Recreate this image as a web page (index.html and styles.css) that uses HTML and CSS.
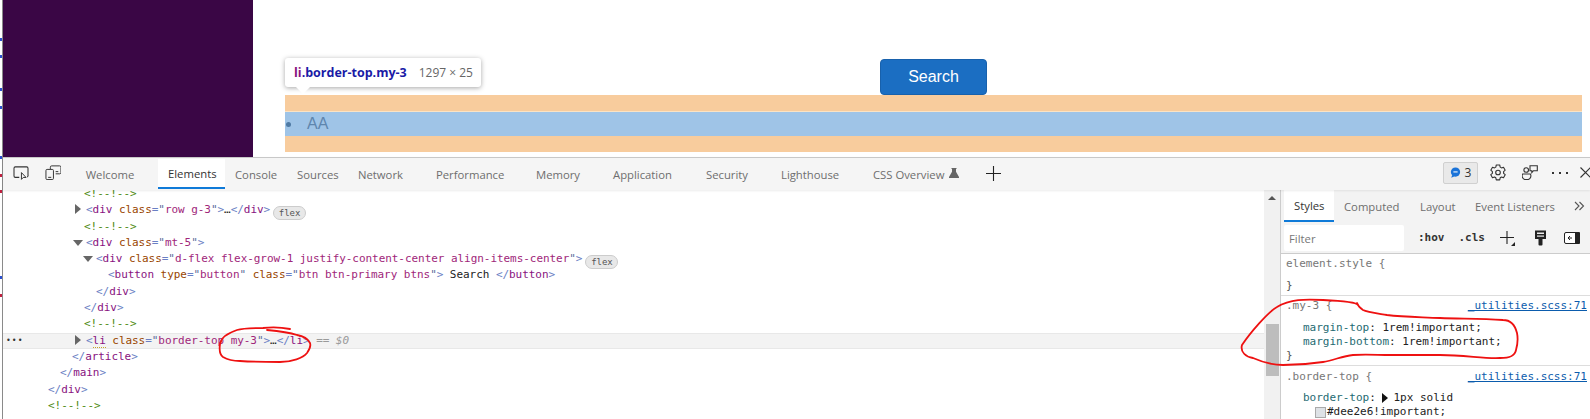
FILE: index.html
```html
<!DOCTYPE html>
<html lang="en">
<head>
<meta charset="utf-8">
<title>DevTools</title>
<link rel="stylesheet" href="styles.css">
</head>
<body>
<div class="page">
  <div class="edge"></div>
  <div class="main">
    <section class="viewport">
      <div class="sidebar"></div>
      <div class="content">
        <div class="tip">
          <span class="tip-tag">li</span><span class="tip-cls">.border-top.my-3</span><span class="tip-size">1297 × 25</span>
        </div>
        <div class="btn-row"><button class="search" type="button">Search</button></div>
        <div class="hl">
          <div class="hl-margin"></div>
          <div class="hl-line"></div>
          <div class="hl-box"><span class="bullet"></span><span class="aa">AA</span></div>
          <div class="hl-margin"></div>
        </div>
      </div>
    </section>

    <section class="devtools">
      <header class="toolbar">
        <div class="tool-icons">
          <svg class="ic" width="16" height="14" viewBox="0 0 18 16"><path d="M7 13H2.500A1.500 1.500 0 0 1 1 11.500v-9A1.500 1.500 0 0 1 2.500 1h13A1.500 1.500 0 0 1 17 2.500V11a1.500 1.500 0 0 1-1 1.500" fill="none" stroke="#333" stroke-width="1.2"/><path d="M9.500 7.500v7.800l2-2.200h3.300z" fill="none" stroke="#333" stroke-width="1.100"/></svg>
          <svg class="ic" width="16" height="15" viewBox="0 0 18 17"><path d="M6 4.500V2.500A1.500 1.500 0 0 1 7.500 1h9A1.500 1.500 0 0 1 18 2.500v6a1.500 1.500 0 0 1-1.500 1.500H12" fill="none" stroke="#333" stroke-width="1.100"/><rect x="1" y="5" width="8.500" height="11.500" rx="1.300" fill="none" stroke="#333" stroke-width="1.100"/><path d="M3.500 14h3.500M12 7.500h3" stroke="#333" stroke-width="1.100"/></svg>
        </div>
        <nav class="tabs">
          <span class="tab w-welcome">Welcome</span>
          <span class="tab tab-on w-elements">Elements</span>
          <span class="tab w-console">Console</span>
          <span class="tab w-sources">Sources</span>
          <span class="tab w-network">Network</span>
          <span class="tab w-perf">Performance</span>
          <span class="tab w-memory">Memory</span>
          <span class="tab w-app">Application</span>
          <span class="tab w-security">Security</span>
          <span class="tab w-light">Lighthouse</span>
          <span class="tab w-css">CSS Overview<svg class="flask" width="10" height="10" viewBox="0 0 10 10"><path d="M2.500 0h5v1H7v2.800l3 5.200v1H0V9l3-5.200V1h-.5z" fill="#666"/></svg></span>
          <svg class="plus" width="15" height="15" viewBox="0 0 15 15"><path d="M7.500 0v15M0 7.500h15" stroke="#222" stroke-width="1.100"/></svg>
        </nav>
        <div class="tool-right">
          <span class="badge"><svg width="11" height="11" viewBox="0 0 13 13"><circle cx="6.500" cy="6" r="5.500" fill="#1a73d8"/><path d="M2.500 9.500 1.500 12.800 5.500 11z" fill="#1a73d8"/><rect x="4" y="5" width="5" height="1.600" fill="#cfe2f8"/></svg><span class="badge-n">3</span></span>
          <svg class="gear" width="16" height="17" viewBox="0 0 16 17"><path d="M6.300 1h3.400l.5 2.100 1.300.8 2-.7 1.700 3-1.600 1.400v1.700l1.600 1.400-1.700 3-2-.7-1.300.8-.5 2.100H6.300l-.5-2.100-1.300-.8-2 .7-1.700-3 1.600-1.400V7.600L.8 6.200l1.700-3 2 .7 1.300-.8z" fill="none" stroke="#333" stroke-width="1.100" stroke-linejoin="round"/><circle cx="8" cy="8.500" r="2.300" fill="none" stroke="#333" stroke-width="1.100"/></svg>
          <svg class="feedback" width="16" height="16" viewBox="0 0 16 16"><circle cx="4.200" cy="5" r="2.300" fill="none" stroke="#333" stroke-width="1.100"/><path d="M.6 9h7.800a3.900 3.900 0 0 1-2 5.500h-3.800a3.900 3.900 0 0 1-2-5.500z" fill="none" stroke="#333" stroke-width="1.100"/><path d="M8 .7h7.300v5H11.500L9.800 7.500V5.700H8z" fill="none" stroke="#333" stroke-width="1.100"/></svg>
          <span class="dots"><i></i><i></i><i></i></span>
          <svg class="close" width="12" height="11" viewBox="0 0 12 11"><path d="M.5.500l10 10M10.500.500l-10 10" stroke="#333" stroke-width="1.100"/></svg>
        </div>
      </header>

      <div class="panes">
        <div class="elements">
          <div class="tree">
            <div class="row row-first i-c1"><span class="c">&lt;!--!--&gt;</span></div>
            <div class="row i-d"><span class="tri tri-r"></span><span class="b">&lt;</span><span class="n">div</span> <span class="a">class</span><span class="b">=</span><span class="q">"</span><span class="v">row g-3</span><span class="q">"</span><span class="b">&gt;</span><span class="t">…</span><span class="b">&lt;/</span><span class="n">div</span><span class="b">&gt;</span><span class="pill">flex</span></div>
            <div class="row i-c1"><span class="c">&lt;!--!--&gt;</span></div>
            <div class="row i-d"><span class="tri tri-d"></span><span class="b">&lt;</span><span class="n">div</span> <span class="a">class</span><span class="b">=</span><span class="q">"</span><span class="v">mt-5</span><span class="q">"</span><span class="b">&gt;</span></div>
            <div class="row i-e"><span class="tri tri-d"></span><span class="b">&lt;</span><span class="n">div</span> <span class="a">class</span><span class="b">=</span><span class="q">"</span><span class="v">d-flex flex-grow-1 justify-content-center align-items-center</span><span class="q">"</span><span class="b">&gt;</span><span class="pill">flex</span></div>
            <div class="row i-f"><span class="b">&lt;</span><span class="n">button</span> <span class="a">type</span><span class="b">=</span><span class="q">"</span><span class="v">button</span><span class="q">"</span> <span class="a">class</span><span class="b">=</span><span class="q">"</span><span class="v">btn btn-primary btns</span><span class="q">"</span><span class="b">&gt;</span><span class="t"> Search </span><span class="b">&lt;/</span><span class="n">button</span><span class="b">&gt;</span></div>
            <div class="row i-g"><span class="b">&lt;/</span><span class="n">div</span><span class="b">&gt;</span></div>
            <div class="row i-c1"><span class="b">&lt;/</span><span class="n">div</span><span class="b">&gt;</span></div>
            <div class="row i-c1"><span class="c">&lt;!--!--&gt;</span></div>
            <div class="row i-d row-sel"><span class="more">•••</span><span class="tri tri-r"></span><span class="b">&lt;</span><span class="n squig">li</span> <span class="a">class</span><span class="b">=</span><span class="q">"</span><span class="v">border-top my-3</span><span class="q">"</span><span class="b">&gt;</span><span class="t">…</span><span class="b">&lt;/</span><span class="n">li</span><span class="b">&gt;</span><span class="eq"> == $0</span></div>
            <div class="row i-h"><span class="b">&lt;/</span><span class="n">article</span><span class="b">&gt;</span></div>
            <div class="row i-i"><span class="b">&lt;/</span><span class="n">main</span><span class="b">&gt;</span></div>
            <div class="row i-j"><span class="b">&lt;/</span><span class="n">div</span><span class="b">&gt;</span></div>
            <div class="row i-j"><span class="c">&lt;!--!--&gt;</span></div>
          </div>
        </div>
        <div class="scrollbar">
          <span class="up"></span>
          <span class="thumb"></span>
        </div>
        <aside class="styles">
          <div class="subtabs">
            <span class="sub sub-on">Styles</span>
            <span class="sub s-comp">Computed</span>
            <span class="sub s-lay">Layout</span>
            <span class="sub s-ev">Event Listeners</span>
            <svg class="chev" width="11" height="10" viewBox="0 0 11 10"><path d="M1 1l4 4-4 4M5.500 1l4 4-4 4" fill="none" stroke="#555" stroke-width="1.100"/></svg>
          </div>
          <div class="filterbar">
            <span class="filter">Filter</span>
            <span class="fb hov">:hov</span>
            <span class="fb cls">.cls</span>
            <span class="fplus"><svg width="16" height="16" viewBox="0 0 16 16"><path d="M8 1v13M1 7.500h14" stroke="#222" stroke-width="1.100"/><path d="M16 12v4h-4z" fill="#222"/></svg></span>
            <svg class="paint" width="13" height="16" viewBox="0 0 13 16"><path d="M1 .5h11v8.500H8.500v5.500a1 1 0 0 1-1 1h-2a1 1 0 0 1-1-1V9H1z" fill="#222"/><rect x="3" y="2.500" width="7" height="1.500" fill="#eee"/><rect x="3" y="5.500" width="7" height="1.200" fill="#eee"/></svg>
            <svg class="side" width="16" height="12" viewBox="0 0 16 12"><rect x=".5" y=".5" width="15" height="11" rx="1.500" fill="#fff" stroke="#222"/><rect x="11" y="0" width="5" height="12" rx="1" fill="#222"/><path d="M8 6H4M6 4 4 6l2 2" fill="none" stroke="#222"/></svg>
          </div>
          <div class="rule r-el">
            <div class="sel-line"><span class="sel-dim">element.style {</span></div>
            <div class="sel-end">}</div>
          </div>
          <div class="rule r-my">
            <div class="sel-line"><span class="sel-dim">.my-3 {</span><a class="src">_utilities.scss:71</a></div>
            <div class="decl d-first"><span class="p">margin-top</span>: 1rem!important;</div>
            <div class="decl"><span class="p">margin-bottom</span>: 1rem!important;</div>
            <div class="sel-end">}</div>
          </div>
          <div class="rule r-bt">
            <div class="sel-line"><span class="sel-dim">.border-top {</span><a class="src">_utilities.scss:71</a></div>
            <div class="decl d-first"><span class="p">border-top</span>: <span class="tri tri-r tri-k"></span>1px solid</div>
            <div class="decl d-ind"><span class="swatch"></span>#dee2e6!important;</div>
          </div>
        </aside>
      </div>
    </section>
  </div>
</div>
<svg class="ink" width="1590" height="419" viewBox="0 0 1590 419">
  <path d="M1358 305C1357 303 1345 301 1323 300C1305 299 1290 299 1277 307C1268 312 1250 333 1242 345C1240 352 1246 357 1253 358C1262 362 1273 365 1283 365C1298 365 1310 364 1323 362C1335 360 1342 356 1353 355C1365 354 1378 355 1390 355C1410 355 1425 355 1440 355C1465 355 1485 359 1500 358C1510 358 1515 356 1516 350C1518 343 1518 338 1517 333C1515 325 1510 320 1503 320C1480 318 1460 319 1440 318C1420 317 1403 317 1387 315C1375 313 1367 312 1363 310C1360 308 1358 306 1357 303"/>
  <path d="M290 329C280 327 272 327 263 328C253 328 243 328 237 330C228 333 221 338 220 344C219 351 220 355 223 357C228 360 234 361 240 361C255 362 268 362 280 362C292 362 303 358 307 353C310 349 311 346 310 343C308 339 303 336 297 335C288 332 278 331 267 330"/>
</svg>
</body>
</html>
```
FILE: styles.css
```css
* { box-sizing: border-box; }
html, body { margin: 0; padding: 0; background: #fff; }
body { width: 1590px; height: 419px; overflow: hidden; position: relative; }
.page { display: flex; width: 1590px; height: 419px; }

.edge {
  flex: 0 0 3px;
  border-right: 1px solid #8a8a8a;
  background:
    linear-gradient(#2a4fd0, #2a4fd0) 0 38px / 2px 3px no-repeat,
    linear-gradient(#2a4fd0, #2a4fd0) 0 55px / 2px 3px no-repeat,
    linear-gradient(#2a4fd0, #2a4fd0) 0 88px / 2px 3px no-repeat,
    linear-gradient(#2a4fd0, #2a4fd0) 0 106px / 2px 3px no-repeat,
    linear-gradient(#2a4fd0, #2a4fd0) 0 156px / 2px 3px no-repeat,
    linear-gradient(#c02040, #c02040) 0 174px / 2px 3px no-repeat,
    linear-gradient(#c02040, #c02040) 0 190px / 2px 3px no-repeat,
    linear-gradient(#2a4fd0, #2a4fd0) 0 276px / 2px 3px no-repeat,
    linear-gradient(#c02040, #c02040) 0 294px / 2px 3px no-repeat,
    #fff;
}
.main { flex: 1; min-width: 0; display: flex; flex-direction: column; }

/* inspected page */
.viewport { flex: 0 0 157px; display: flex; position: relative; overflow: hidden; }
.sidebar { flex: 0 0 250px; background: #3a0645; }
.content { flex: 1; padding: 59px 5px 0 32px; position: relative; }
.btn-row { display: flex; justify-content: center; width: 1297px; }
.search {
  width: 107px; height: 36px; border: 1px solid #1861ac; border-radius: 4px;
  background: #1b6ec2; color: #fff; padding: 0;
  font: 16px "Liberation Sans", sans-serif;
}
.hl { width: 1297px; }
.hl-margin { height: 16px; background: #f8cc9d; }
.hl-line { height: 1px; background: #fbe3c4; }
.hl-box { height: 24px; background: #9fc4e7; display: flex; align-items: center; }
.bullet { width: 5px; height: 5px; border-radius: 50%; background: #4f7aa4; margin-left: 1px; }
.aa { margin-left: 16px; font: 16px "Liberation Sans", sans-serif; color: #5e86ae; }
.tip {
  position: absolute; left: 32px; top: 58px; width: 196px; height: 29px;
  background: #fff; border-radius: 3px; box-shadow: 0 1px 5px rgba(0,0,0,.35);
  display: flex; align-items: center; padding: 1px 0 0 9px; z-index: 2;
  font: 12px/1 "Open Sans", sans-serif;
}
.tip::after {
  content: ""; position: absolute; left: 11px; top: 29px;
  border: 7px solid transparent; border-top-color: #fff; border-bottom: 0;
}
.tip-tag, .tip-cls { font-size: 12.500px; font-weight: 700; }
.tip-tag { color: #881280; }
.tip-cls { color: #1a1aa6; }
.tip-size { color: #666; margin-left: 12px; }

/* devtools */
.devtools { flex: 1; min-height: 0; display: flex; flex-direction: column; font-family: "Open Sans", sans-serif; }
.toolbar {
  flex: 0 0 33px; display: flex; align-items: stretch; background: #f5f5f5;
  border-top: 1px solid #c8c8c8; box-shadow: 0 1px 2px rgba(0,0,0,.08); position: relative; z-index: 1;
}
.tool-icons { flex: 0 0 72.700px; display: flex; align-items: center; gap: 16px; padding: 0 0 3px 10px; }
.ic { display: block; }
.tabs { display: flex; align-items: stretch; font-size: 11.300px; color: #6e6e6e; padding-top: 1px; }
.tab { display: flex; align-items: center; padding-left: 10px; white-space: nowrap; }
.tab-on { background: #fff; color: #333; border-bottom: 2px solid #0f7ad8; margin-bottom: 1px; }
.w-welcome { width: 82.300px; }
.w-elements { width: 67px; }
.w-console { width: 62px; }
.w-sources { width: 61px; }
.w-network { width: 78px; }
.w-perf { width: 100px; }
.w-memory { width: 77px; }
.w-app { width: 93px; }
.w-security { width: 75px; }
.w-light { width: 92px; }
.w-css { width: 123px; }
.flask { margin-left: 5px; margin-top: -3px; }
.plus { align-self: center; margin-top: -3px; }
.tool-right { margin-left: auto; display: flex; align-items: center; flex: 0 0 147px; overflow: hidden; padding-bottom: 3px; }
.badge {
  flex: none; width: 35px; height: 22px; display: flex; align-items: center; justify-content: center; gap: 4px;
  background: #e9e9e9; border: 1px solid #d0d0d0; border-radius: 2px; font-size: 12px; color: #333;
}
.gear { margin-left: 12px; flex: none; }
.feedback { margin-left: 16px; flex: none; }
.dots { display: flex; gap: 5px; margin-left: 14px; flex: none; }
.dots i { width: 2px; height: 2px; background: #333; }
.close { margin-left: 12px; flex: none; }

.panes { flex: 1; min-height: 0; display: flex; }
.elements { flex: 0 0 1261px; }
.tree { font: 11px/16.300px "DejaVu Sans Mono", monospace; letter-spacing: -0.050px; color: #222; }
.row { height: 16.300px; white-space: pre; position: relative; }
.row-first { height: 12.300px; line-height: 8.300px; }
.row-sel { background: #f3f3f3; border-top: 1px solid #e8e8e8; border-bottom: 1px solid #e8e8e8; line-height: 14.300px; }
.i-c1 { padding-left: 81px; }
.i-d { padding-left: 72px; }
.i-e { padding-left: 82px; }
.i-f { padding-left: 105px; }
.i-g { padding-left: 93px; }
.i-h { padding-left: 69px; }
.i-i { padding-left: 57px; }
.i-j { padding-left: 45px; }
.b { color: #6a7fc4; }
.n { color: #881280; }
.a { color: #994500; }
.v { color: #a0267a; }
.q { color: #5a6a9a; }
.t { color: #222; }
.c { color: #4e8a12; }
.eq { color: #9a9a9a; font-style: italic; }
.squig { border-bottom: 1px dotted #c9a227; }
.more { position: absolute; left: 3px; font-size: 8px; letter-spacing: 1px; color: #333; }
.tri { display: inline-block; width: 0; height: 0; border-style: solid; border-color: transparent; }
.tri-r { border-width: 5px 0 5px 6px; border-left-color: #666; margin-right: 5px; vertical-align: -1px; }
.tri-d { border-width: 6px 5px 0 5px; border-top-color: #666; margin-left: -2px; margin-right: 3px; vertical-align: 0; }
.tri-k { border-left-color: #111; margin-right: 5px; }
.pill {
  margin-left: 3px; height: 14px; width: 33px; border-radius: 7px; background: #e8e8e8; border: 1px solid #ccc;
  display: inline-flex; align-items: center; justify-content: center; vertical-align: -3px;
  font: 9px "DejaVu Sans Mono", monospace; color: #555;
}
.scrollbar { flex: 0 0 17px; background: #f1f1f1; display: flex; flex-direction: column; align-items: center; padding-top: 6px; border-right: 1px solid #ccc; }
.up { width: 0; height: 0; border: 4px solid transparent; border-bottom: 4px solid #555; border-top: 0; }
.thumb { width: 13px; height: 52px; background: #bdbdbd; margin-top: 124px; margin-left: 1px; }

.styles { flex: 1; min-width: 0; display: flex; flex-direction: column; font-size: 11.300px; overflow: hidden; }
.subtabs { flex: 0 0 32px; background: #f3f3f3; display: flex; align-items: stretch; padding-left: 3px; color: #6e6e6e; }
.sub { display: flex; align-items: center; white-space: nowrap; }
.sub-on { width: 50px; background: #fff; color: #333; border-bottom: 2px solid #0f7ad8; padding-left: 10px; margin-right: 10px; }
.s-comp { width: 76px; }
.s-lay { width: 55px; }
.s-ev { width: 99px; }
.chev { align-self: center; }
.filterbar { flex: 0 0 32px; background: #f3f3f3; display: flex; align-items: center; padding-left: 3px; border-bottom: 1px solid #ccc; }
.filter { width: 120px; height: 26px; background: #fff; border-radius: 2px; color: #777; padding: 1px 0 0 5px; display: flex; align-items: center; }
.fb { font: 700 11px "DejaVu Sans Mono", monospace; color: #333; }
.hov { margin-left: 14px; }
.cls { margin-left: 14px; }
.fplus { margin-left: 14px; display: flex; }
.paint { margin-left: 19px; }
.side { margin-left: 17px; }
.rule { font: 11px/14px "DejaVu Sans Mono", monospace; color: #222; padding: 0 3px 0 5px; border-bottom: 1px solid #ddd; }
.sel-line { display: flex; justify-content: space-between; height: 14px; }
.sel-dim { color: #777; }
.src { color: #0b5cad; text-decoration: underline; white-space: pre; }
.sel-end { color: #555; height: 14px; }
.r-el { height: 42px; padding-top: 3px; }
.r-el .sel-end { margin-top: 8px; }
.r-my { height: 70px; padding-top: 3px; }
.r-bt { border-bottom: 0; padding-top: 4px; }
.decl { padding-left: 17px; height: 14px; white-space: pre; display: flex; align-items: center; }
.d-first { margin-top: 8px; }
.r-bt .d-first { margin-top: 7px; }
.d-ind { padding-left: 29px; }
.p { color: #1e6a72; }
.swatch { width: 11px; height: 11px; background: #dee2e6; border: 1px solid #aaa; margin-right: 1px; }

.ink { position: absolute; left: 0; top: 0; pointer-events: none; z-index: 5; }
.ink path { fill: none; stroke: #ee1111; stroke-width: 1.800; stroke-linecap: round; stroke-linejoin: round; }
```
